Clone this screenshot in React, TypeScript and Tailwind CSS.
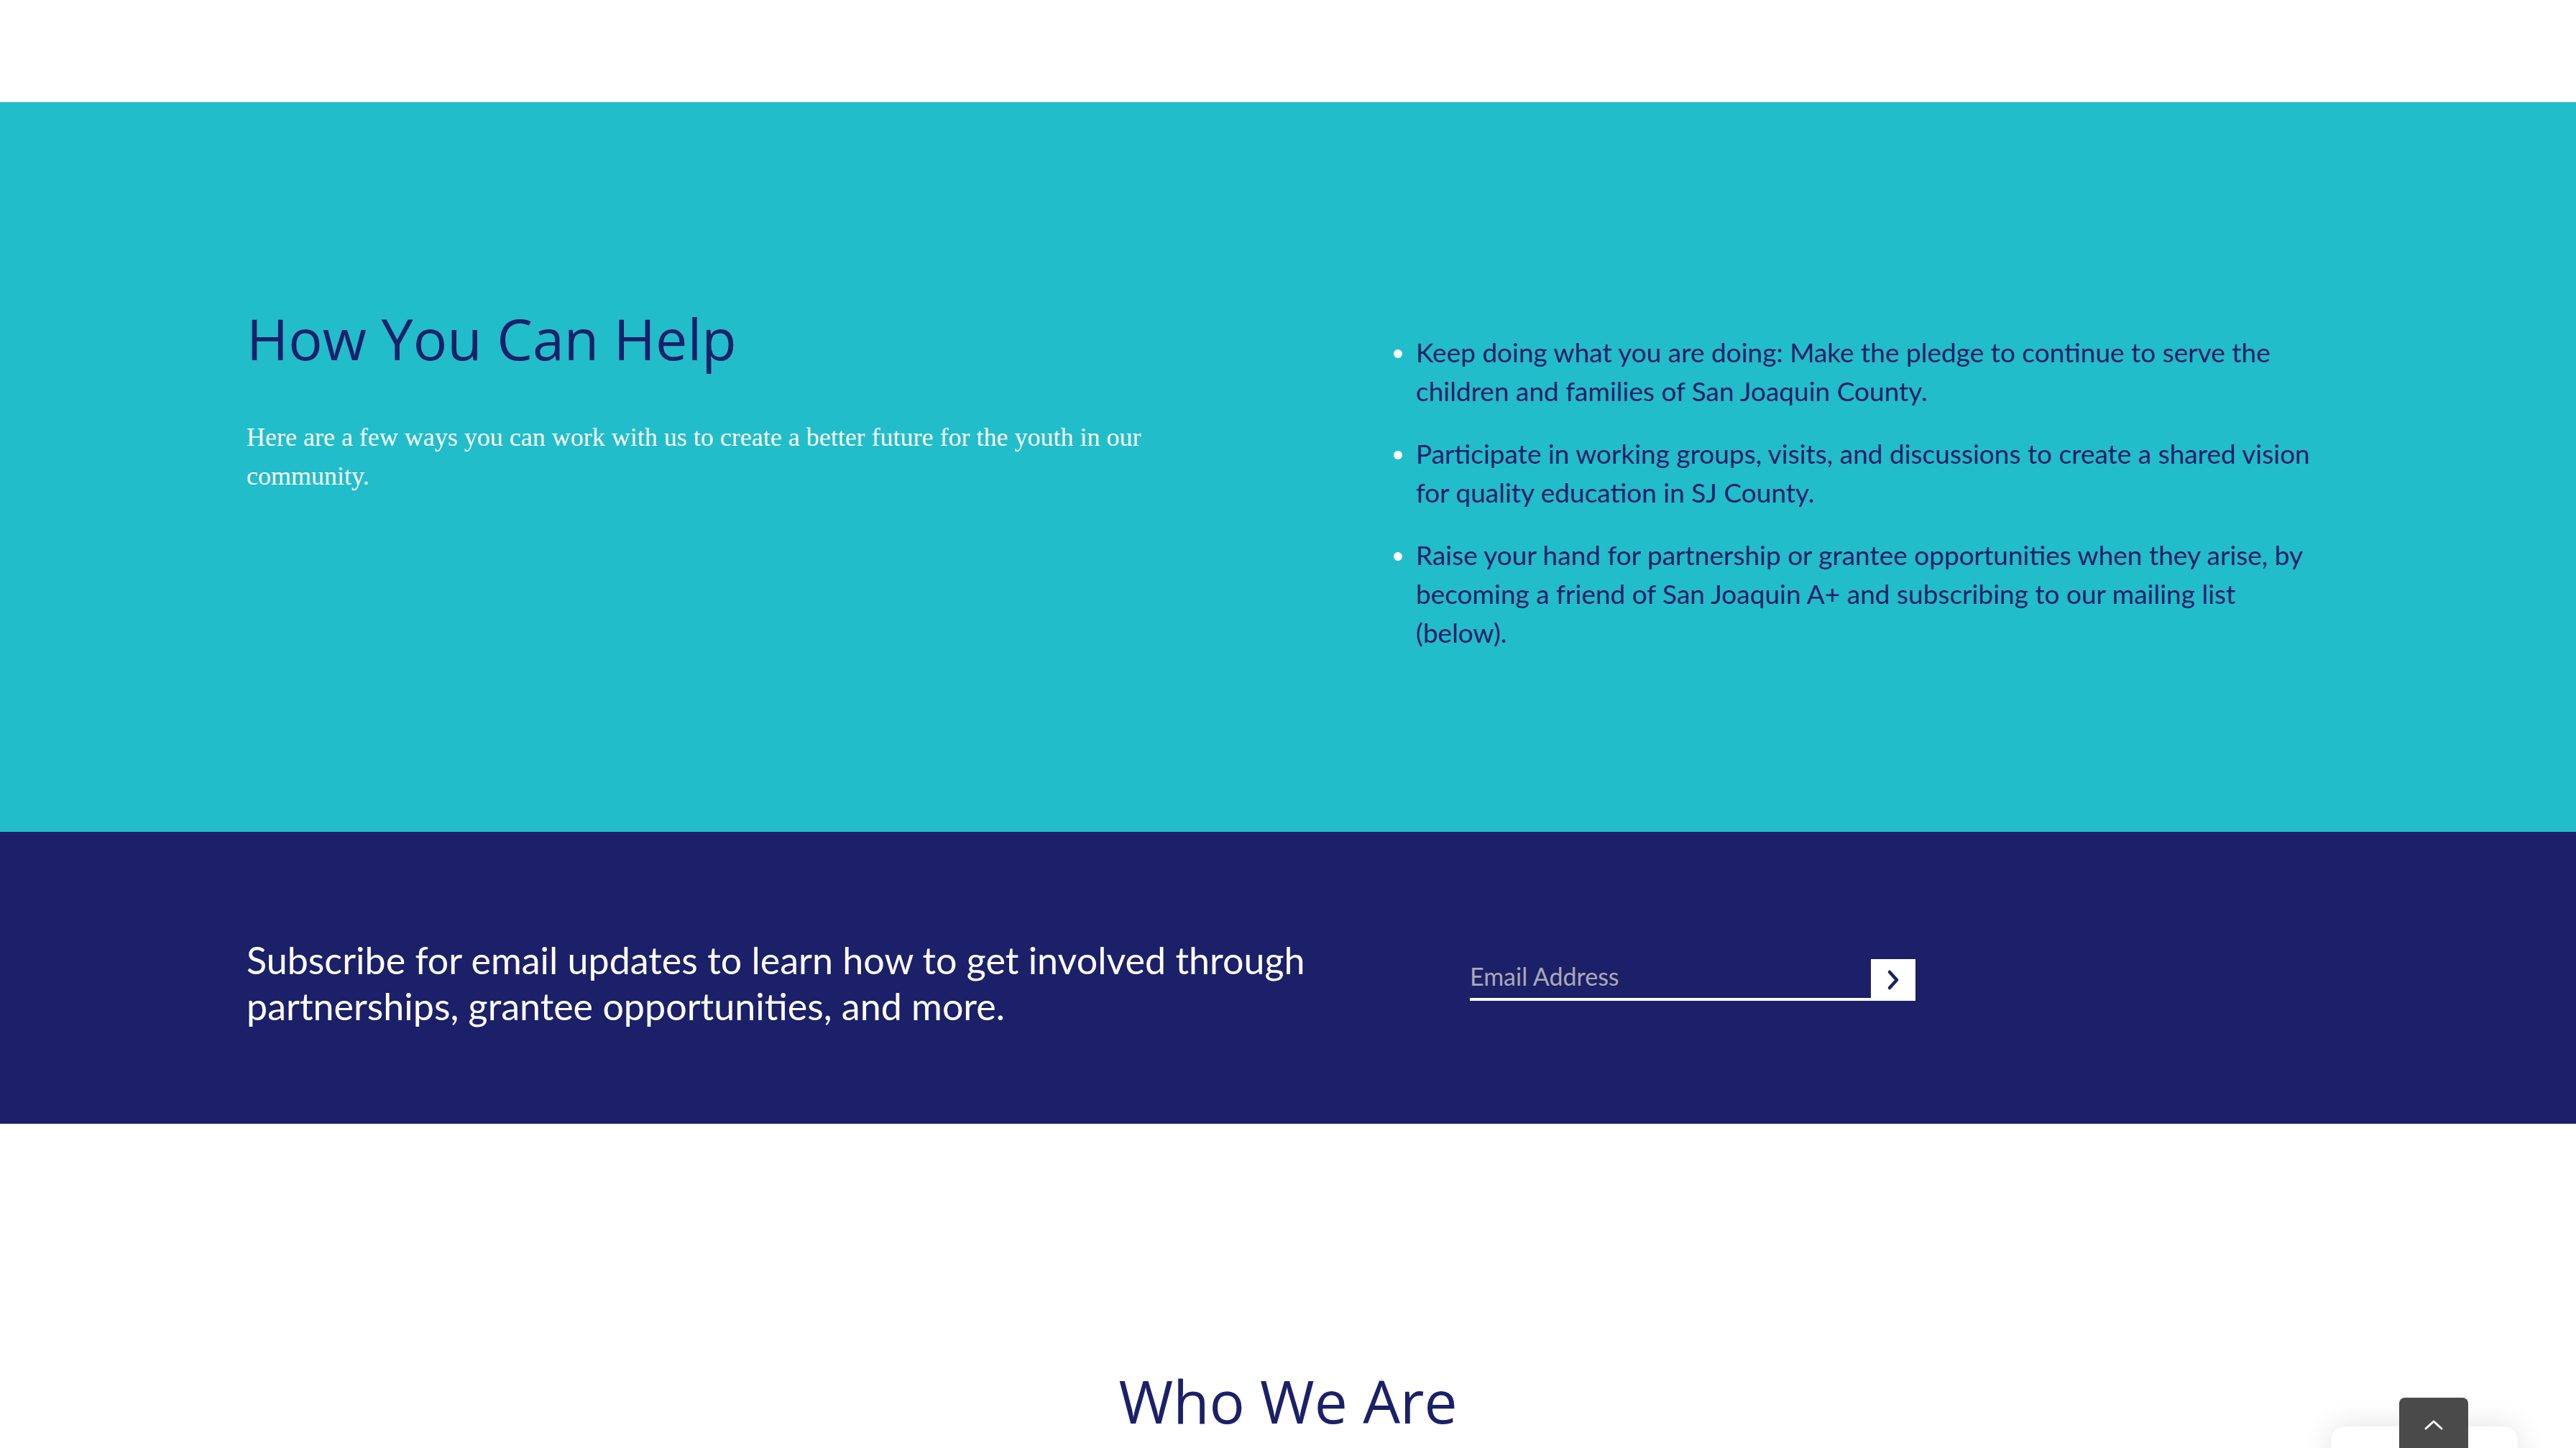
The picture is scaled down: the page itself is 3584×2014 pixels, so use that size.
import React from 'react'

const navy = 'text-[#1b2069]'

function ChevronRight() {
  return (
    <svg width="22" height="30" viewBox="0 0 22 30" fill="none">
      <path d="M6 4 L16 15 L6 26" stroke="#1b2069" strokeWidth="4.5" strokeLinecap="round" strokeLinejoin="round" />
    </svg>
  )
}

function ChevronUp() {
  return (
    <svg width="28" height="16" viewBox="0 0 28 16" fill="none">
      <path d="M3 13 L14 3 L25 13" stroke="#ffffff" strokeWidth="3" strokeLinecap="round" strokeLinejoin="round" />
    </svg>
  )
}

export default function App() {
  const items = [
    'Keep doing what you are doing: Make the pledge to continue to serve the children and families of San Joaquin County.',
    'Participate in working groups, visits, and discussions to create a shared vision for quality education in SJ County.',
    'Raise your hand for partnership or grantee opportunities when they arise, by becoming a friend of San Joaquin A+ and subscribing to our mailing list (below).'
  ]

  return (
    <div className="min-h-screen bg-white font-['Lato',sans-serif]">
      {/* top band */}
      <div className="h-[142px] bg-white" />

      {/* How you can help */}
      <section className="h-[1015px] bg-[#22bdca]">
        <div className="flex items-start px-[343px] pt-[289px]">
          <div className="w-[1340px]">
            <h2 className={`font-['Open_Sans',sans-serif] text-[79px] leading-none ${navy}`}>
              How You Can Help
            </h2>
            <p className="mt-[71px] w-[1290px] font-['Liberation_Serif',serif] text-[36px] leading-[54px] text-white">
              Here are a few ways you can work with us to create a better future for the youth in our community.
            </p>
          </div>
          <ul className={`ml-auto mr-[11px] mt-[32px] w-[1295px] list-disc pl-[35px] text-[37px] leading-[54px] marker:text-white ${navy}`}>
            {items.map((item, i) => (
              <li key={i} className={i > 0 ? 'mt-[33px]' : ''}>
                {item}
              </li>
            ))}
          </ul>
        </div>
      </section>

      {/* Subscribe */}
      <section className="flex h-[406px] items-center bg-[#1b2069] px-[343px]">
        <p className="mt-[14px] w-[1560px] text-[52px] leading-[64px] text-white">
          Subscribe for email updates to learn how to get involved through partnerships, grantee opportunities, and more.
        </p>
        <div className="ml-[142px] mt-[5px] flex items-end">
          <input
            type="email"
            placeholder="Email Address"
            className="h-[58px] w-[558px] border-b-4 border-white bg-transparent pb-[6px] text-[34px] text-white placeholder:text-[#a9a9b4] focus:outline-none"
          />
          <button className="flex h-[58px] w-[62px] items-center justify-center bg-white">
            <ChevronRight />
          </button>
        </div>
      </section>

      {/* Who we are */}
      <section className="h-[600px] bg-white pt-[344px]">
        <h2 className={`text-center font-['Open_Sans',sans-serif] text-[82px] leading-none ${navy}`}>
          Who We Are
        </h2>
      </section>

      {/* floating widgets */}
      <div className="fixed left-[3243px] top-[1984px] h-[200px] w-[260px] rounded-[20px] bg-white shadow-[0_0_40px_rgba(0,0,0,0.12)]" />
      <button className="fixed left-[3338px] top-[1944px] flex h-[120px] w-[96px] justify-center rounded-t-[8px] bg-[#4a4a4a] pt-[30px]">
        <ChevronUp />
      </button>
    </div>
  )
}
